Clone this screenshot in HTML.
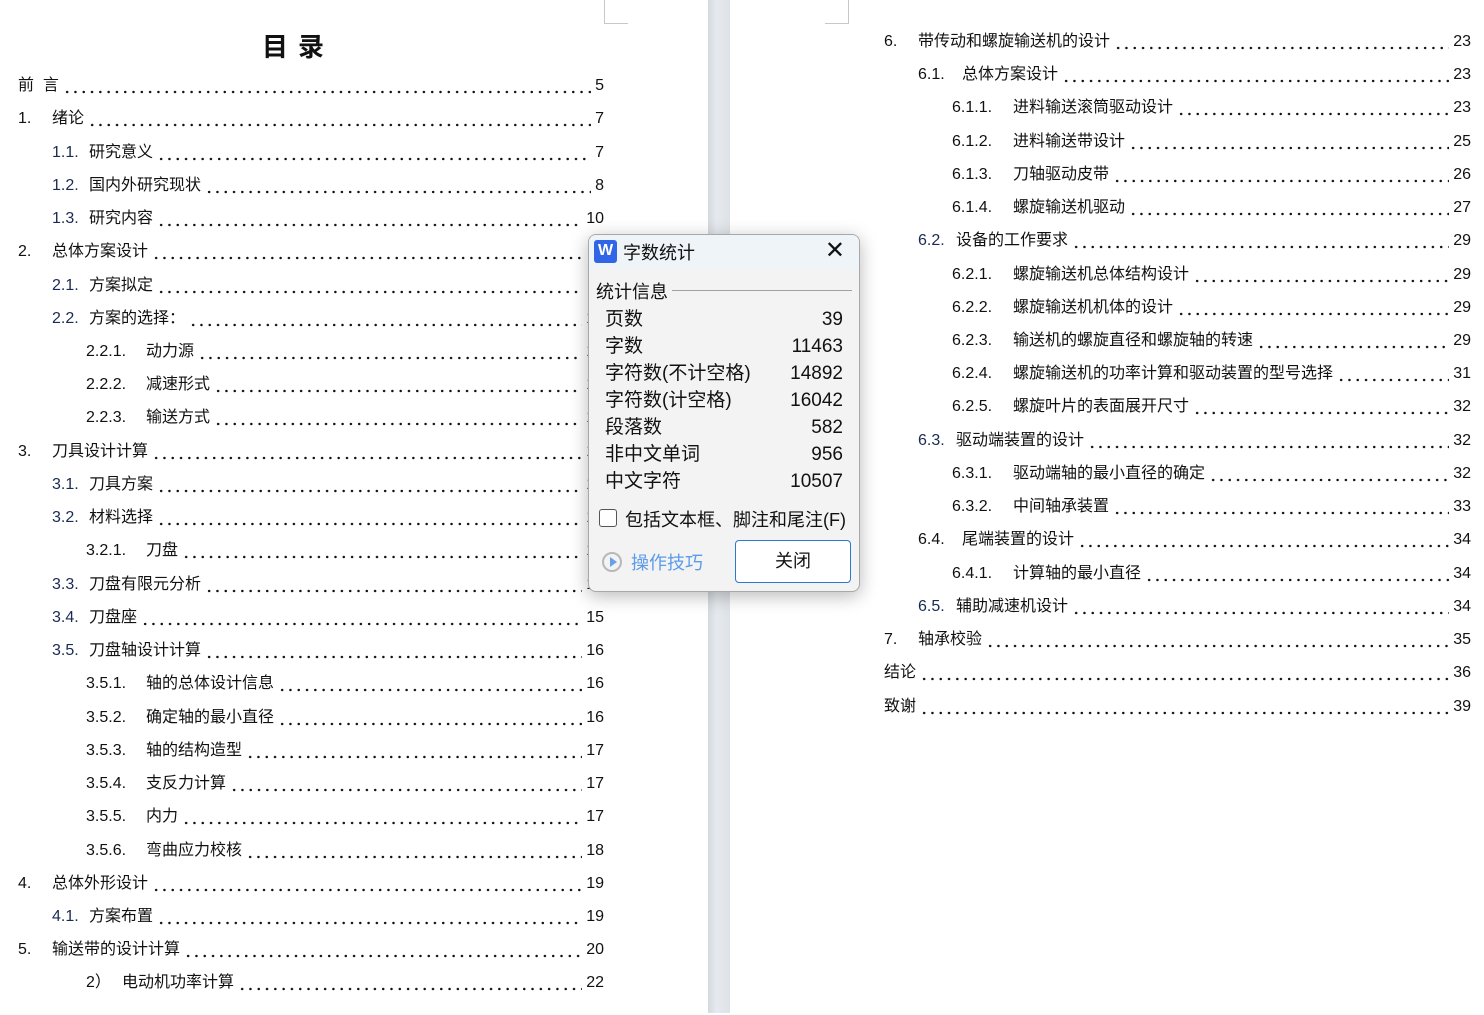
<!DOCTYPE html>
<html><head><meta charset="utf-8">
<style>
*{margin:0;padding:0;box-sizing:border-box}
body{width:1484px;height:1013px;position:relative;overflow:hidden;background:#fff;font-family:"Liberation Sans","Noto Sans CJK SC","WenQuanYi Zen Hei",sans-serif;color:#111}
.gut{position:absolute;left:708px;top:0;width:22px;height:1013px;background:linear-gradient(90deg,#d4d9de,#e6eaee 40%,#dde2e7)}
.cm{position:absolute;border-color:#c8c8c8;border-style:solid;width:24px;height:24px}
.w{position:absolute;left:0;top:2px;width:1484px;height:1013px}
.r{position:absolute;height:20px;line-height:20px;font-size:16px;display:flex;white-space:nowrap}
.r .n{position:absolute;top:0}
.r .d{flex:1;margin:0 4px;background-image:radial-gradient(circle,#111 1.1px,transparent 1.4px);background-size:8.3px 4px;background-repeat:repeat-x;background-position:0 14px}
.r .p{text-align:right}
.blue{color:#1a2a55}
h1{position:absolute;left:262px;top:27px;font-size:26px;font-weight:bold;letter-spacing:10px;font-family:"Liberation Sans","Noto Sans CJK SC",sans-serif}
.dlg{position:absolute;left:588px;top:234px;width:272px;height:358px;border:1px solid #a8a8a8;border-radius:8px;background:#f3f3f3;box-shadow:0 4px 18px rgba(0,0,0,.28);overflow:hidden;font-size:19px}
.tb{height:34px;background:#eef4f8;position:relative}
.wi{position:absolute;left:5px;top:5px;width:23px;height:23px;background:#2f65e6;border-radius:3px;color:#fff;font-weight:bold;font-size:16px;text-align:center;line-height:21px}
.tt{position:absolute;left:34px;top:4px;font-size:18px}
.x{position:absolute;right:14px;top:1px;font-size:24px;font-weight:300}
.row{position:absolute;left:16px;width:238px;display:flex;justify-content:space-between;font-size:19px;line-height:24px}
</style></head><body>
<div class="gut"></div>
<div class="cm" style="left:604px;top:0;border-width:0 0 1px 1px"></div>
<div class="cm" style="left:825px;top:0;border-width:0 1px 1px 0"></div>
<h1>目录</h1>
<div class="w">
<!-- left page -->
<div class="r" style="top:74px;left:18px;right:880px"><span>前&nbsp;&nbsp;言</span><span class="d"></span><span class="p">5</span></div>
<div class="r" style="top:107px;left:52px;right:880px"><span class="n" style="left:-34px">1.</span><span>绪论</span><span class="d"></span><span class="p">7</span></div>
<div class="r" style="top:141px;left:89px;right:880px"><span class="n blue" style="left:-37px">1.1.</span><span>研究意义</span><span class="d"></span><span class="p">7</span></div>
<div class="r" style="top:174px;left:89px;right:880px"><span class="n blue" style="left:-37px">1.2.</span><span>国内外研究现状</span><span class="d"></span><span class="p">8</span></div>
<div class="r" style="top:207px;left:89px;right:880px"><span class="n blue" style="left:-37px">1.3.</span><span>研究内容</span><span class="d"></span><span class="p">10</span></div>
<div class="r" style="top:240px;left:52px;right:880px"><span class="n" style="left:-34px">2.</span><span>总体方案设计</span><span class="d"></span><span class="p">11</span></div>
<div class="r" style="top:274px;left:89px;right:880px"><span class="n blue" style="left:-37px">2.1.</span><span>方案拟定</span><span class="d"></span><span class="p">11</span></div>
<div class="r" style="top:307px;left:89px;right:880px"><span class="n blue" style="left:-37px">2.2.</span><span>方案的选择：</span><span class="d"></span><span class="p">12</span></div>
<div class="r" style="top:340px;left:146px;right:880px"><span class="n" style="left:-60px">2.2.1.</span><span>动力源</span><span class="d"></span><span class="p">12</span></div>
<div class="r" style="top:373px;left:146px;right:880px"><span class="n" style="left:-60px">2.2.2.</span><span>减速形式</span><span class="d"></span><span class="p">12</span></div>
<div class="r" style="top:406px;left:146px;right:880px"><span class="n" style="left:-60px">2.2.3.</span><span>输送方式</span><span class="d"></span><span class="p">13</span></div>
<div class="r" style="top:440px;left:52px;right:880px"><span class="n" style="left:-34px">3.</span><span>刀具设计计算</span><span class="d"></span><span class="p">13</span></div>
<div class="r" style="top:473px;left:89px;right:880px"><span class="n blue" style="left:-37px">3.1.</span><span>刀具方案</span><span class="d"></span><span class="p">13</span></div>
<div class="r" style="top:506px;left:89px;right:880px"><span class="n blue" style="left:-37px">3.2.</span><span>材料选择</span><span class="d"></span><span class="p">14</span></div>
<div class="r" style="top:539px;left:146px;right:880px"><span class="n" style="left:-60px">3.2.1.</span><span>刀盘</span><span class="d"></span><span class="p">14</span></div>
<div class="r" style="top:573px;left:89px;right:880px"><span class="n blue" style="left:-37px">3.3.</span><span>刀盘有限元分析</span><span class="d"></span><span class="p">14</span></div>
<div class="r" style="top:606px;left:89px;right:880px"><span class="n blue" style="left:-37px">3.4.</span><span>刀盘座</span><span class="d"></span><span class="p">15</span></div>
<div class="r" style="top:639px;left:89px;right:880px"><span class="n blue" style="left:-37px">3.5.</span><span>刀盘轴设计计算</span><span class="d"></span><span class="p">16</span></div>
<div class="r" style="top:672px;left:146px;right:880px"><span class="n" style="left:-60px">3.5.1.</span><span>轴的总体设计信息</span><span class="d"></span><span class="p">16</span></div>
<div class="r" style="top:706px;left:146px;right:880px"><span class="n" style="left:-60px">3.5.2.</span><span>确定轴的最小直径</span><span class="d"></span><span class="p">16</span></div>
<div class="r" style="top:739px;left:146px;right:880px"><span class="n" style="left:-60px">3.5.3.</span><span>轴的结构造型</span><span class="d"></span><span class="p">17</span></div>
<div class="r" style="top:772px;left:146px;right:880px"><span class="n" style="left:-60px">3.5.4.</span><span>支反力计算</span><span class="d"></span><span class="p">17</span></div>
<div class="r" style="top:805px;left:146px;right:880px"><span class="n" style="left:-60px">3.5.5.</span><span>内力</span><span class="d"></span><span class="p">17</span></div>
<div class="r" style="top:839px;left:146px;right:880px"><span class="n" style="left:-60px">3.5.6.</span><span>弯曲应力校核</span><span class="d"></span><span class="p">18</span></div>
<div class="r" style="top:872px;left:52px;right:880px"><span class="n" style="left:-34px">4.</span><span>总体外形设计</span><span class="d"></span><span class="p">19</span></div>
<div class="r" style="top:905px;left:89px;right:880px"><span class="n blue" style="left:-37px">4.1.</span><span>方案布置</span><span class="d"></span><span class="p">19</span></div>
<div class="r" style="top:938px;left:52px;right:880px"><span class="n" style="left:-34px">5.</span><span>输送带的设计计算</span><span class="d"></span><span class="p">20</span></div>
<div class="r" style="top:971px;left:122px;right:880px"><span class="n" style="left:-36px">2）</span><span>电动机功率计算</span><span class="d"></span><span class="p">22</span></div>

<!-- right page -->
<div class="r" style="top:30px;left:918px;right:13px"><span class="n" style="left:-34px">6.</span><span>带传动和螺旋输送机的设计</span><span class="d"></span><span class="p">23</span></div>
<div class="r" style="top:63px;left:962px;right:13px"><span class="n" style="left:-44px">6.1.</span><span>总体方案设计</span><span class="d"></span><span class="p">23</span></div>
<div class="r" style="top:96px;left:1013px;right:13px"><span class="n" style="left:-61px">6.1.1.</span><span>进料输送滚筒驱动设计</span><span class="d"></span><span class="p">23</span></div>
<div class="r" style="top:130px;left:1013px;right:13px"><span class="n" style="left:-61px">6.1.2.</span><span>进料输送带设计</span><span class="d"></span><span class="p">25</span></div>
<div class="r" style="top:163px;left:1013px;right:13px"><span class="n" style="left:-61px">6.1.3.</span><span>刀轴驱动皮带</span><span class="d"></span><span class="p">26</span></div>
<div class="r" style="top:196px;left:1013px;right:13px"><span class="n" style="left:-61px">6.1.4.</span><span>螺旋输送机驱动</span><span class="d"></span><span class="p">27</span></div>
<div class="r" style="top:229px;left:956px;right:13px"><span class="n blue" style="left:-38px">6.2.</span><span>设备的工作要求</span><span class="d"></span><span class="p">29</span></div>
<div class="r" style="top:263px;left:1013px;right:13px"><span class="n" style="left:-61px">6.2.1.</span><span>螺旋输送机总体结构设计</span><span class="d"></span><span class="p">29</span></div>
<div class="r" style="top:296px;left:1013px;right:13px"><span class="n" style="left:-61px">6.2.2.</span><span>螺旋输送机机体的设计</span><span class="d"></span><span class="p">29</span></div>
<div class="r" style="top:329px;left:1013px;right:13px"><span class="n" style="left:-61px">6.2.3.</span><span>输送机的螺旋直径和螺旋轴的转速</span><span class="d"></span><span class="p">29</span></div>
<div class="r" style="top:362px;left:1013px;right:13px"><span class="n" style="left:-61px">6.2.4.</span><span>螺旋输送机的功率计算和驱动装置的型号选择</span><span class="d"></span><span class="p">31</span></div>
<div class="r" style="top:395px;left:1013px;right:13px"><span class="n" style="left:-61px">6.2.5.</span><span>螺旋叶片的表面展开尺寸</span><span class="d"></span><span class="p">32</span></div>
<div class="r" style="top:429px;left:956px;right:13px"><span class="n blue" style="left:-38px">6.3.</span><span>驱动端装置的设计</span><span class="d"></span><span class="p">32</span></div>
<div class="r" style="top:462px;left:1013px;right:13px"><span class="n" style="left:-61px">6.3.1.</span><span>驱动端轴的最小直径的确定</span><span class="d"></span><span class="p">32</span></div>
<div class="r" style="top:495px;left:1013px;right:13px"><span class="n" style="left:-61px">6.3.2.</span><span>中间轴承装置</span><span class="d"></span><span class="p">33</span></div>
<div class="r" style="top:528px;left:962px;right:13px"><span class="n" style="left:-44px">6.4.</span><span>尾端装置的设计</span><span class="d"></span><span class="p">34</span></div>
<div class="r" style="top:562px;left:1013px;right:13px"><span class="n" style="left:-61px">6.4.1.</span><span>计算轴的最小直径</span><span class="d"></span><span class="p">34</span></div>
<div class="r" style="top:595px;left:956px;right:13px"><span class="n blue" style="left:-38px">6.5.</span><span>辅助减速机设计</span><span class="d"></span><span class="p">34</span></div>
<div class="r" style="top:628px;left:918px;right:13px"><span class="n" style="left:-34px">7.</span><span>轴承校验</span><span class="d"></span><span class="p">35</span></div>
<div class="r" style="top:661px;left:884px;right:13px"><span>结论</span><span class="d"></span><span class="p">36</span></div>
<div class="r" style="top:695px;left:884px;right:13px"><span>致谢</span><span class="d"></span><span class="p">39</span></div>
</div>

<!-- dialog -->
<div class="dlg">
 <div class="tb"><div class="wi">W</div><div class="tt">字数统计</div><div class="x">✕</div></div>
 <div style="position:absolute;left:7px;top:43px;font-size:18px">统计信息</div>
 <div style="position:absolute;left:83px;top:55px;width:180px;height:1px;background:#a0a0a0"></div>
 <div class="row" style="top:73px"><span>页数</span><span>39</span></div>
 <div class="row" style="top:100px"><span>字数</span><span>11463</span></div>
 <div class="row" style="top:127px"><span>字符数(不计空格)</span><span>14892</span></div>
 <div class="row" style="top:154px"><span>字符数(计空格)</span><span>16042</span></div>
 <div class="row" style="top:181px"><span>段落数</span><span>582</span></div>
 <div class="row" style="top:208px"><span>非中文单词</span><span>956</span></div>
 <div class="row" style="top:235px"><span>中文字符</span><span>10507</span></div>
 <div style="position:absolute;left:10px;top:274px;width:18px;height:18px;border:1px solid #555;border-radius:3px;background:#fff"></div>
 <div style="position:absolute;left:36px;top:271px;font-size:18px">包括文本框、脚注和尾注(F)</div>
 <div style="position:absolute;left:13px;top:317px;width:20px;height:20px;border:2px solid #b8b8b8;border-radius:50%"><div style="position:absolute;left:6px;top:3px;width:0;height:0;border-left:7px solid #6aa0e8;border-top:5px solid transparent;border-bottom:5px solid transparent"></div></div>
 <div style="position:absolute;left:42px;top:314px;font-size:18px;color:#5b9be8">操作技巧</div>
 <div style="position:absolute;left:146px;top:305px;width:116px;height:43px;border:1px solid #2b78d0;border-radius:4px;background:#fff;text-align:center;line-height:41px;font-size:18px">关闭</div>
</div>
</body></html>
